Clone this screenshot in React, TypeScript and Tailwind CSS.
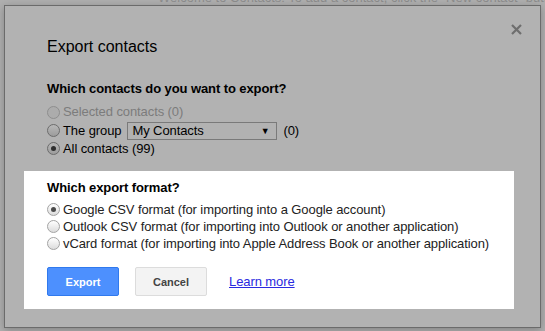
import React from "react";

type RadioProps = { checked?: boolean; disabled?: boolean; dim?: boolean };

// old-style chrome radio, drawn by hand so it matches the screenshot
const Radio: React.FC<RadioProps> = ({ checked, disabled, dim }) => {
  const ring = dim
    ? disabled
      ? "border-[#8e8e8e] bg-[#acacac]"
      : "border-[#6c6c6c] bg-gradient-to-b from-[#b8b8b8] to-[#9c9c9c]"
    : "border-[#a3a3a3] bg-gradient-to-b from-white to-[#dcdcdc]";
  return (
    <span
      className={`flex items-center justify-center w-[13px] h-[13px] rounded-full border shrink-0 ${ring}`}
    >
      {checked && (
        <span
          className={`w-[5px] h-[5px] rounded-full ${dim ? "bg-[#2e2e2e]" : "bg-[#4a4a4a]"}`}
        />
      )}
    </span>
  );
};

const formats = [
  "Google CSV format (for importing into a Google account)",
  "Outlook CSV format (for importing into Outlook or another application)",
  "vCard format (for importing into Apple Address Book or another application)",
];

export default function App() {
  return (
    <div className="relative w-[545px] h-[331px] overflow-hidden bg-[#afafaf] font-['Liberation_Sans',Arial,sans-serif]">
      {/* page behind the modal */}
      <div className="pl-[158px] -mt-[10px] text-[13px] leading-[16px] text-[#8d8d8d] whitespace-nowrap">
        Welcome to Contacts! To add a contact, click the "New contact" button, but first
      </div>

      {/* modal */}
      <div className="absolute left-[4px] top-[5px] w-[537px] h-[323px] border border-[#6b6b6b] bg-[#b2b2b2] shadow-[0_2px_8px_rgba(0,0,0,0.25)]">
        <button className="absolute left-[506px] top-[18px] w-[11px] h-[11px] text-[#6e6e6e]">
          <svg viewBox="0 0 11 11" className="w-[11px] h-[11px]">
            <path d="M1 1L10 10M10 1L1 10" stroke="currentColor" strokeWidth="2.2" />
          </svg>
        </button>

        <div className="pt-[32px] pl-[42px]">
          <h2 className="text-[16px] leading-[18px] text-black">Export contacts</h2>

          <div className="mt-[25px] text-[13px] leading-[16px] tracking-[-0.09px]">
            <div className="font-bold text-black">Which contacts do you want to export?</div>
            <div className="mt-[6px] h-[18px] flex items-center gap-[3px] text-[#7c7c7c]">
              <Radio dim disabled />
              <span>Selected contacts (0)</span>
            </div>
            <div className="h-[19px] flex items-center gap-[3px] text-black">
              <Radio dim />
              <span>The group</span>
              <div className="ml-[3px] w-[150px] h-[18px] border border-[#7a7a7a] flex items-center justify-between pl-[4px] pr-[7px]">
                <span>My Contacts</span>
                <span className="text-[9px]">▼</span>
              </div>
              <span className="ml-[3px]">(0)</span>
            </div>
            <div className="h-[17px] flex items-center gap-[3px] text-black">
              <Radio dim checked />
              <span>All contacts (99)</span>
            </div>
          </div>
        </div>

        {/* highlighted part */}
        <div className="mt-[14px] ml-[19px] w-[490px] h-[138px] bg-white pl-[23px] pt-[9px] text-[13px] leading-[16px] tracking-[-0.09px]">
          <div className="font-bold text-black">Which export format?</div>
          <div className="mt-[5px]">
            {formats.map((f, i) => (
              <div key={f} className="h-[17px] flex items-center gap-[3px] text-[#222]">
                <Radio checked={i === 0} />
                <span>{f}</span>
              </div>
            ))}
          </div>
          <div className="mt-[15px] flex items-center tracking-normal">
            <button className="w-[72px] h-[29px] rounded-[2px] border border-[#3079ed] bg-[#4d90fe] text-white text-[11px] font-bold">
              Export
            </button>
            <button className="ml-[16px] w-[72px] h-[29px] rounded-[2px] border border-[#dcdcdc] bg-[#f3f3f3] text-[#444] text-[11px] font-bold">
              Cancel
            </button>
            <a href="#" className="ml-[22px] text-[13px] text-[#2a2ae0] underline tracking-[-0.09px]">
              Learn more
            </a>
          </div>
        </div>
      </div>
    </div>
  );
}
